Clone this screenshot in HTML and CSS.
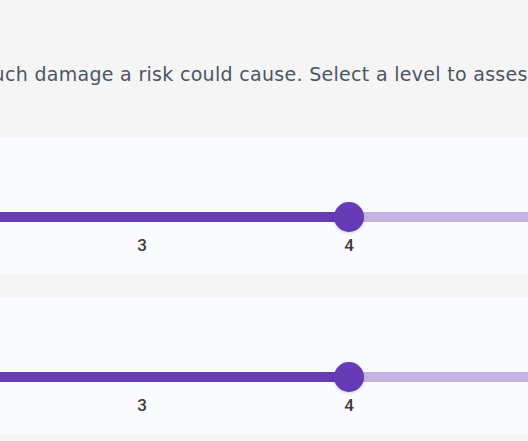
FILE: index.html
```html
<!DOCTYPE html>
<html lang="en">
<head>
<meta charset="utf-8">
<title>Risk assessment</title>
<link rel="stylesheet" href="styles.css">
</head>
<body>
<p class="intro">Impact measures how much damage a risk could cause. Select a level to assess its severity.</p>
<div class="cards">
  <section class="card">
    <div class="slider">
      <div class="track"><div class="fill" style="width:75%"></div><div class="thumb" style="left:75%"></div></div>
      <div class="ticks"><span>1</span><span>2</span><span>3</span><span>4</span><span>5</span></div>
    </div>
  </section>
  <section class="card">
    <div class="slider">
      <div class="track"><div class="fill" style="width:75%"></div><div class="thumb" style="left:75%"></div></div>
      <div class="ticks"><span>1</span><span>2</span><span>3</span><span>4</span><span>5</span></div>
    </div>
  </section>
</div>
</body>
</html>
```
FILE: styles.css
```css
html, body {
  margin: 0;
  padding: 0;
}
body {
  background: #f5f5f5;
  overflow: hidden;
  font-family: "Open Sans", "DejaVu Sans", sans-serif;
  width: 528px;
  height: 441px;
}
.intro {
  margin: 0;
  padding-top: 62px;
  font-family: "DejaVu Sans", sans-serif;
  font-size: 19px;
  line-height: 24px;
  letter-spacing: 0.3px;
  color: #4b5563;
  white-space: nowrap;
  text-indent: -248px;
}
.cards {
  margin-top: 51px;
  margin-left: -300px;
  width: 1000px;
  display: flex;
  flex-direction: column;
  gap: 22px;
}
.card {
  background: #fafbff;
  height: 138px;
  box-sizing: border-box;
  padding: 75px 144px 0 28px;
}
.slider {
  width: 828px;
}
.track {
  position: relative;
  height: 10px;
  border-radius: 5px;
  background: #c4b2e3;
}
.fill {
  height: 100%;
  background: #673ab7;
  border-radius: 5px 0 0 5px;
}
.thumb {
  position: absolute;
  top: 50%;
  width: 30px;
  height: 30px;
  border-radius: 50%;
  background: #673ab7;
  transform: translate(-50%, -50%);
  box-shadow: 0 1px 3px rgba(0, 0, 0, 0.18);
}
.ticks {
  display: flex;
  justify-content: space-between;
  margin: 13px -10px 0;
}
.ticks span {
  width: 20px;
  text-align: center;
  font-family: Roboto, "Open Sans", sans-serif;
  font-size: 17px;
  line-height: 20px;
  font-weight: 500;
  color: #3a3a3a;
}
```
